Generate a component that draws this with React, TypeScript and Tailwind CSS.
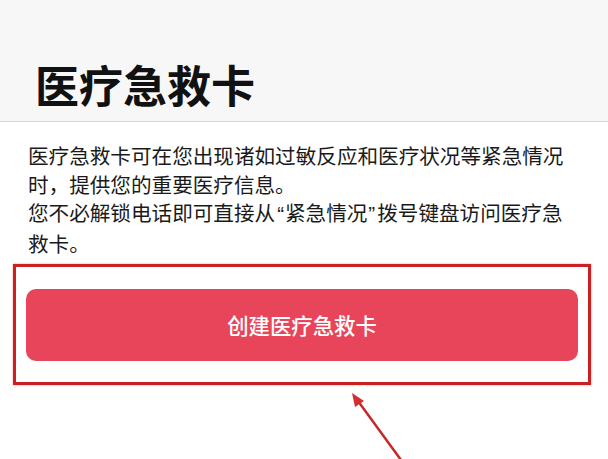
import React from "react";

export default function App() {
  return (
    <div
      className="relative w-[608px] h-[459px] overflow-hidden bg-white"
      style={{ fontFamily: '"Noto Sans CJK SC", "Noto Sans", sans-serif' }}
    >
      <div className="h-[122px] bg-[#f7f7f7] border-b border-[#d6d6d6] flex items-end pl-[35px] pb-[9px]">
        <h1 className="text-[44px] leading-[56px] font-bold text-[#111111]">医疗急救卡</h1>
      </div>
      <div className="pl-[28px] pr-[40px] pt-[19px] text-[20.6px] leading-[28.5px] text-[#1a1a1a]">
        <p>医疗急救卡可在您出现诸如过敏反应和医疗状况等紧急情况时，提供您的重要医疗信息。</p>
        <p>
          您不必解锁电话即可直接从<span className="font-['Liberation_Sans',sans-serif] pl-[2px] pr-[1px]">“</span>紧急情况<span className="font-['Liberation_Sans',sans-serif] pl-[1px] pr-[2px]">”</span>拨号键盘访问医疗急救卡。
        </p>
      </div>
      <div className="ml-[13px] mt-[7px] w-[578px] h-[121px] border-[3px] border-[#cc1f1f] shadow-[0_0_2px_rgba(180,0,0,0.4)] pt-[22px] px-[10px]">
        <div className="h-[72px] rounded-[10px] bg-[#e8445a] flex items-center justify-center text-white text-[21.4px] font-medium">
          创建医疗急救卡
        </div>
      </div>
      <svg
        className="absolute left-0 top-0"
        width="608"
        height="459"
        viewBox="0 0 608 459"
      >
        <line x1="401" y1="460" x2="358" y2="401" stroke="#c62828" strokeWidth="2.5" />
        <polygon points="352,393 355,407 364,401" fill="#d32f2f" />
      </svg>
    </div>
  );
}
